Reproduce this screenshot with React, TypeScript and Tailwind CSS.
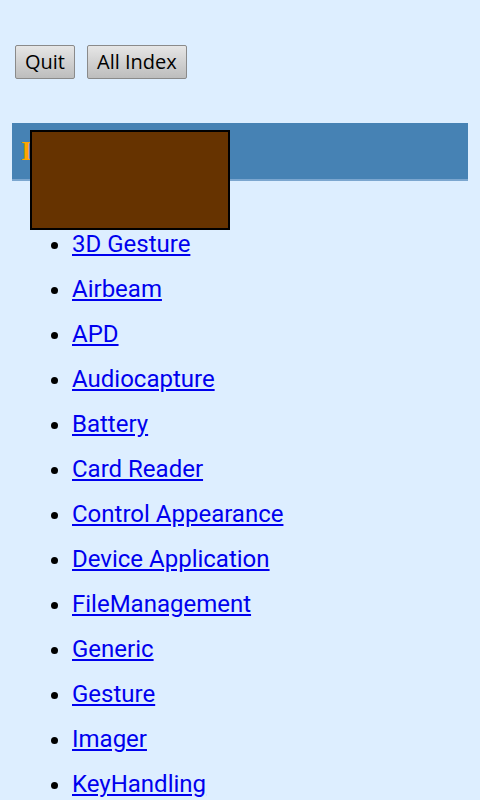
import React from 'react';

const ITEMS = [
  '3D Gesture',
  'Airbeam',
  'APD',
  'Audiocapture',
  'Battery',
  'Card Reader',
  'Control Appearance',
  'Device Application',
  'FileManagement',
  'Generic',
  'Gesture',
  'Imager',
  'KeyHandling',
];

const Btn: React.FC<{ label: string }> = ({ label }) => (
  <button className="h-[34px] px-[9px] rounded-[2px] border border-[#8a8a8a] bg-gradient-to-b from-[#e6e6e6] to-[#bdbdbd] text-[20px] text-black leading-none [font-family:'Open_Sans',sans-serif]">
    {label}
  </button>
);

const App: React.FC = () => {
  return (
    <div className="relative min-h-screen bg-[#ddeeff] px-[12px] pt-[45px] overflow-hidden">
      <div className="flex gap-[12px] pl-[3px]">
        <Btn label="Quit" />
        <Btn label="All Index" />
      </div>

      <div className="mt-[44px] h-[58px] bg-[#4682b4] border-b-[2px] border-[#7ba6cf] flex items-center pl-[9px]">
        <h1 className="text-[28px] font-bold text-[#ffa500] [font-family:'Liberation_Serif',serif]">
          Index
        </h1>
      </div>

      {/* brown overlay box */}
      <div className="absolute left-[30px] top-[130px] w-[200px] h-[100px] bg-[#663300] border-[2px] border-black" />

      <ul className="list-disc pl-[60px] mt-[41px] text-[24px] [font-family:Roboto,sans-serif]">
        {ITEMS.map((it) => (
          <li key={it} className="leading-[45px] marker:text-black">
            <a href="#" className="text-[#0000ee] underline">
              {it}
            </a>
          </li>
        ))}
      </ul>
    </div>
  );
};

export default App;
